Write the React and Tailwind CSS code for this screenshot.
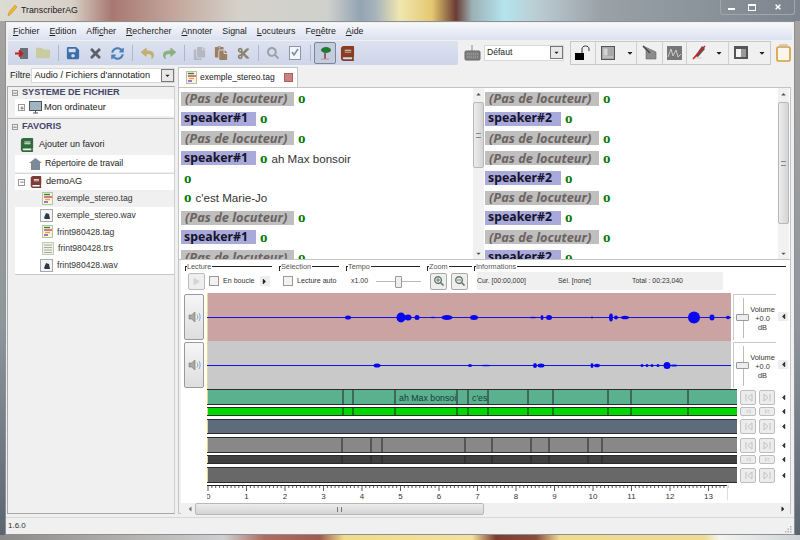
import { FaSave, FaTimes, FaSyncAlt, FaReply, FaShare, FaCopy, FaPaste, FaCut, FaSearch, FaFolder, FaCaretDown, FaCaretLeft, FaCaretRight, FaPlay, FaSearchPlus, FaSearchMinus, FaPlus, FaMinus, FaBook } from "react-icons/fa";

const font = "font-['Liberation_Sans',sans-serif]";

const menus = [
  ["", "F", "ichier"],
  ["", "E", "dition"],
  ["Affi", "c", "her"],
  ["", "R", "echercher"],
  ["", "A", "nnoter"],
  ["Si", "g", "nal"],
  ["", "L", "ocuteurs"],
  ["Fe", "n", "être"],
  ["", "A", "ide"],
];

const leftRows = [
  ["none"],
  ["spk", "speaker#1"],
  ["none"],
  ["spk", "speaker#1", "ah Max bonsoir"],
  ["plain"],
  ["plain", "", "c'est Marie-Jo"],
  ["none"],
  ["spk", "speaker#1"],
  ["none"],
];

const rightRows = [
  ["none"],
  ["spk", "speaker#2"],
  ["none"],
  ["none"],
  ["spk", "speaker#2"],
  ["none"],
  ["spk", "speaker#2"],
  ["none"],
  ["spk", "speaker#2"],
];

const wave1 = [[141, 2, 6], [194, 5, 9], [201, 3, 7], [210, 2.5, 5], [226, 0.8, 6], [240, 2.5, 11], [267, 2.5, 8], [326, 0.8, 8], [335, 2.5, 3], [342, 2.5, 6], [385, 1, 2], [404, 4, 4], [409, 2, 4], [418, 1.8, 8], [487, 6, 12], [505, 3, 5], [521, 1.8, 4]];
const wave2 = [[170, 2, 7], [263, 1.5, 4], [279, 0.8, 11], [328, 2.5, 4], [334, 2, 7], [385, 2.5, 3], [390, 1.8, 6], [435, 1.5, 3], [440, 1.5, 3], [445, 1.5, 3], [451, 1.5, 3], [460, 3.5, 7], [467, 1, 7]];
const greenTicks = [136, 146, 188, 250, 261, 281, 321, 346, 401, 424, 481];
const greyTicks = [135, 164, 175, 258, 285, 324, 342, 381, 395];

function Wave({ blobs, bg }) {
  return (
    <svg width="524" height="48" className={`block shrink-0 ${bg}`}>
      <line x1="0.5" y1="0" x2="0.5" y2="48" stroke="#eed98a" />
      <line x1="0" y1="24.5" x2="524" y2="24.5" stroke="#1414e0" />
      {blobs.map(([x, h, w], i) => (
        <ellipse key={i} cx={x} cy="24.5" rx={w / 2} ry={h} fill="#0808f0" />
      ))}
    </svg>
  );
}

function Track({ h, bg, ticks = [], labels = [] }) {
  return (
    <svg width="530" height={h} className={`block shrink-0 border-y border-[#2c2c2c] ${bg}`}>
      <line x1="0.5" y1="0" x2="0.5" y2={h} stroke="#e7d77c" />
      {ticks.map((x) => (
        <line key={x} x1={x} y1="0" x2={x} y2={h} stroke="#222" strokeWidth="1" />
      ))}
      {labels.map(([x, t]) => (
        <text key={x} x={x} y="10.5" fontSize="8.8" fontFamily="Liberation Sans" fill="#1c3a30">{t}</text>
      ))}
    </svg>
  );
}

function TrackBtns({ small }) {
  const size = small ? "h-[9px]" : "h-[15px]";
  return (
    <div className={`flex items-center w-[51px] pl-[3px] gap-[3px] ${size}`}>
      {[0, 1].map((i) => (
        <span key={i} className={`w-[17px] border border-[#bdbdbd] rounded-[2px] bg-[#ececec] flex items-center justify-center text-[#c2c2c2] ${size}`}>
          <svg width="9" height={small ? 5 : 9} viewBox="0 0 9 9" fill="none" stroke="currentColor">
            <path d={i ? "M1 1l4 3.5-4 3.5zM7 1v7" : "M2 1v7M8 1l-4 3.5 4 3.5z"} />
          </svg>
        </span>
      ))}
      <FaCaretLeft size={9} className="text-[#333] ml-[1px] shrink-0" />
    </div>
  );
}

function Ruler() {
  const ticks = [];
  for (let i = 0; i <= 135; i++) ticks.push(i);
  return (
    <svg width="530" height="16" className="block">
      <line x1="0" y1="0.5" x2="520" y2="0.5" stroke="#222" />
      {ticks.map((i) => (
        <line key={i} x1={i * 3.85 + 1} y1="0" x2={i * 3.85 + 1} y2={i % 10 === 0 ? 6 : 3} stroke="#333" strokeWidth="0.8" />
      ))}
      {[1, 2, 3, 4, 5, 6, 7, 8, 9, 10, 11, 12, 13].map((n) => (
        <text key={n} x={n * 38.5 + 1} y="13.5" textAnchor="middle" fontSize="8" fontFamily="Liberation Sans" fill="#333">{n}</text>
      ))}
      <text x="-1" y="13.5" fontSize="8" fontFamily="Liberation Sans" fill="#333">0</text>
      <line x1="520.5" y1="0" x2="520.5" y2="15" stroke="#ddd" />
    </svg>
  );
}

function TagIcon() {
  return (
    <svg width="11" height="13" viewBox="0 0 11 13" className="shrink-0">
      <rect x="0.5" y="0.5" width="10" height="12" fill="#f2f5e6" stroke="#b5c29a" />
      <path d="M2 2.5h6" stroke="#2a8a2a" strokeWidth="1.4" />
      <path d="M2 5h8" stroke="#d9336f" strokeWidth="1.4" />
      <path d="M3 7.5h5" stroke="#e0b020" strokeWidth="1.4" />
      <path d="M2 10h4" stroke="#7040c0" strokeWidth="1.4" />
    </svg>
  );
}

function WavIcon() {
  return (
    <svg width="13" height="13" viewBox="0 0 13 13" className="shrink-0">
      <rect x="0.5" y="0.5" width="12" height="12" fill="#f4f4f4" stroke="#a8a8a8" />
      <path d="M4 9l2-5 3 1 1 5H5z" fill="#2c3a48" />
    </svg>
  );
}

function TrsIcon() {
  return (
    <svg width="12" height="13" viewBox="0 0 12 13" className="shrink-0">
      <rect x="0.5" y="0.5" width="11" height="12" fill="#eef2e4" stroke="#c0ccb0" />
      <path d="M2 3h8M2 5.5h8M2 8h8M2 10.5h8" stroke="#a8a8a8" />
    </svg>
  );
}

function SpeakerButton() {
  return (
    <div className="w-[20px] h-[46px] mt-[1px] ml-[3px] mr-[3px] border border-[#9a9a9a] rounded-[2px] bg-[linear-gradient(to_bottom,#f6f6f6,#dedede)] flex items-center justify-center shrink-0">
      <svg width="13" height="14" viewBox="0 0 13 14">
        <path d="M1 5h2.5L7 2v10L3.5 9H1z" fill="#a9a9a0" stroke="#777" strokeWidth="0.6" />
        <path d="M9 4.5c1 1.5 1 3.5 0 5M11 3c1.5 2.5 1.5 5.5 0 8" fill="none" stroke="#7ea6d8" strokeWidth="0.9" />
      </svg>
    </div>
  );
}

function VolumePanel() {
  return (
    <div className="flex items-center ml-[2px] h-[47px]">
      <div className="relative w-[43px] h-[46px] border-l border-t border-[#c8c8c8] flex">
        <span className="absolute left-[9px] top-[3px] h-[40px] w-px bg-[#bdbdbd]" />
        <span className="absolute left-[2px] top-[19px] w-[13px] h-[7px] rounded-[1px] border border-[#999] bg-[#ececec]" />
        <div className="ml-[15px] w-[28px] text-center text-[7.4px] leading-[9px] text-[#333] mt-[10px]">
          Volume<br />+0.0<br />dB
        </div>
      </div>
      <span className="ml-[2px] w-[10px] h-[9px] bg-[#eeeeee] flex items-center justify-center">
        <FaCaretLeft size={9} className="text-[#333]" />
      </span>
    </div>
  );
}

function Group({ title, className, children }) {
  return (
    <div className={`relative h-[26px] shrink-0 ${className}`}>
      <span className="absolute left-0 top-[1px] w-[3px] h-[5px] border-l border-t border-[#222]" />
      <span className="absolute left-0 right-0 top-[1px] h-px bg-[#222]" />
      <span className="absolute left-[2px] -top-[3px] bg-white text-[7.3px] leading-[9px] text-[#555] pr-[1px]">{title}</span>
      <div className="pt-[6px] pl-[3px] h-full flex items-center gap-[4px]">{children}</div>
    </div>
  );
}

function Row({ row, w1, w2 }) {
  const [kind, label, text] = row;
  return (
    <div className="h-[19.8px] flex items-center shrink-0">
      {kind === "none" && (
        <span style={{ width: w1 }} className="h-[14px] bg-[#bfbfbf] pl-[4px] mr-[4px] flex items-center text-[12.8px] font-bold italic text-[#6c6361] font-['Noto_Sans',sans-serif] whitespace-nowrap">
          (Pas de locuteur)
        </span>
      )}
      {kind === "spk" && (
        <span style={{ width: w2 }} className="h-[14px] bg-[#a9a9da] pl-[3px] mr-[4px] flex items-center text-[12.3px] font-bold text-[#14142a] font-['Noto_Sans',sans-serif] whitespace-nowrap">
          {label}
        </span>
      )}
      <span className={`font-['Liberation_Serif',serif] font-bold text-[15px] leading-none text-[#0b7a0b] ${kind === "plain" ? "ml-[3px]" : ""}`}>o</span>
      {text && <span className="ml-[4px] text-[11.6px] text-[#333] whitespace-nowrap">{text}</span>}
    </div>
  );
}

function VScroll({ top, h }) {
  return (
    <div className="relative w-[11px] bg-[#f1f1f1] shrink-0 flex flex-col justify-between items-center text-[#555]">
      <FaCaretDown size={7} className="rotate-180 mt-[3px]" />
      <FaCaretDown size={7} className="mb-[2px]" />
      <span style={{ top, height: h }} className="absolute left-0 w-[11px] rounded-[2px] border border-[#b8b8b8] bg-[linear-gradient(to_right,#ececec,#d4d4d4)] flex items-center justify-center">
        <span className="w-[5px] h-[5px] border-y border-[#888]" />
      </span>
    </div>
  );
}

function FileRow({ icon, name, active, indent = "pl-[27px]" }) {
  return (
    <div className={`h-[16.8px] flex items-center gap-[4px] ${indent} ${active ? "bg-[#f0f0f0]" : "bg-white"}`}>
      {icon}
      <span className="text-[8.6px] text-[#333] whitespace-nowrap">{name}</span>
    </div>
  );
}

function ToolIcon({ children, className = "" }) {
  return <span className={`w-[22px] h-[22px] flex items-center justify-center shrink-0 ${className}`}>{children}</span>;
}

function Sep() {
  return <span className="w-[8px] flex justify-center shrink-0"><span className="w-px h-[16px] bg-[#b0b6c4]" /></span>;
}

function RightSep() {
  return <span className="w-px h-[22px] bg-[#cfcfcf] shrink-0" />;
}

export default function App() {
  return (
    <div className={`w-[800px] h-[540px] overflow-hidden flex flex-col text-[#222] ${font} bg-[linear-gradient(to_bottom,#a8a4a0,#8f969c_60%,#5a6470)]`}>
      {/* title */}
      <div className="h-[21px] shrink-0 flex items-center pl-[7px] relative bg-[linear-gradient(to_right,#dcdcd4_0%,#d8d0c8_9%,#a87870_14%,#c4a89e_22%,#d4d2ca_30%,#cfd0cc_41%,#93a4b2_45%,#a8b4bc_47%,#f0e6b0_50%,#e4c870_54%,#6a3c34_57%,#9cb0b4_59%,#b4e4ee_63%,#bccdd4_67%,#9aa2a8_75%,#7c858e_100%)]">
        <svg width="11" height="13" viewBox="0 0 11 13" className="mr-[3px]">
          <path d="M1 12l1-4 6-7 2 2-6 7z" fill="#e8b92e" stroke="#b98a14" strokeWidth="0.5" />
        </svg>
        <span className="text-[8.8px] text-[#1a1a1a]">TranscriberAG</span>
        <div className="absolute right-[5px] top-0 w-[75px] h-[15px] border border-t-0 border-[#a0a6ac] rounded-b-[3px] flex items-center text-white">
          <span className="w-[21px] flex justify-center"><span className="w-[7px] h-[2px] mt-[4px] bg-white" /></span>
          <span className="w-[20px] flex justify-center"><span className="w-[8px] h-[7px] border border-white border-t-2" /></span>
          <span className="flex-1 flex justify-center"><FaTimes size={8} /></span>
        </div>
      </div>

      {/* window */}
      <div className="mx-[5px] h-[514px] border border-[#8b9096] bg-[#f0f0f0] flex flex-col shrink-0">
        <div className="h-[17px] shrink-0 mx-[2px] mt-px bg-[linear-gradient(to_bottom,#f7f8fb,#dbe1f0)] flex items-center pl-[5px] gap-[10px] text-[8.8px] text-[#222]">
          {menus.map(([a, u, b], i) => (
            <span key={i} className="whitespace-nowrap">{a}<span className="underline">{u}</span>{b}</span>
          ))}
        </div>

        {/* toolbars */}
        <div className="h-[25px] shrink-0 flex">
          <div className="w-[450px] ml-[2px] mt-px rounded-br-[2px] bg-[linear-gradient(to_bottom,#dde2f0,#cdd5e8)] flex items-center pl-[2px] shrink-0">
            <ToolIcon>
              <svg width="15" height="13" viewBox="0 0 15 13"><path d="M6 1h8v11H6z" fill="#6d7078" /><path d="M1 6.5h7M5 3.5l3 3-3 3" fill="none" stroke="#c02020" strokeWidth="2.2" /></svg>
            </ToolIcon>
            <ToolIcon><FaFolder size={14} className="text-[#cbcba0]" /></ToolIcon>
            <Sep />
            <ToolIcon><FaSave size={14} className="text-[#3c6ea8]" /></ToolIcon>
            <ToolIcon><FaTimes size={15} className="text-[#5c6068]" /></ToolIcon>
            <ToolIcon><FaSyncAlt size={13} className="text-[#4c80b8]" /></ToolIcon>
            <Sep />
            <ToolIcon><FaReply size={13} className="text-[#c2b070]" /></ToolIcon>
            <ToolIcon><FaShare size={13} className="text-[#8eb080]" /></ToolIcon>
            <Sep />
            <ToolIcon><FaCopy size={13} className="text-[#b4b8c2]" /></ToolIcon>
            <ToolIcon><FaPaste size={14} className="text-[#9a8060]" /></ToolIcon>
            <ToolIcon><FaCut size={13} className="text-[#8c8470]" /></ToolIcon>
            <Sep />
            <ToolIcon><FaSearch size={12} className="text-[#9aa0a8]" /></ToolIcon>
            <ToolIcon>
              <svg width="12" height="14" viewBox="0 0 12 14"><rect x="0.5" y="0.5" width="11" height="13" fill="#f4f6f8" stroke="#8a96a4" /><path d="M3 6l2 3 4-6" fill="none" stroke="#6f8ca8" strokeWidth="1.5" /></svg>
            </ToolIcon>
            <Sep />
            <span className="w-[22px] h-[22px] rounded-[2px] border border-[#7d8694] bg-[#c4cde0] flex items-center justify-center shrink-0">
              <svg width="14" height="16" viewBox="0 0 14 16"><path d="M7 8v6" stroke="#8a3a3a" strokeWidth="1.5" /><ellipse cx="8" cy="5" rx="5" ry="3" fill="#1f7a30" /><path d="M3 14h8" stroke="#c88" /></svg>
            </span>
            <ToolIcon><FaBook size={15} className="text-[#8a3c20] ml-[1px]" /></ToolIcon>
          </div>
          <div className="flex items-center pl-[6px]">
            <svg width="17" height="16" viewBox="0 0 17 16" className="shrink-0">
              <path d="M8 0v6" stroke="#888" />
              <rect x="1" y="6" width="15" height="9" rx="1" fill="#808080" stroke="#666" />
              <path d="M3 9h11M3 12h11" stroke="#a8a8a8" strokeDasharray="1 1" />
            </svg>
            <div className="ml-[3px] w-[80px] h-[16px] bg-white border border-[#d8d8d8] flex items-center pl-[2px] text-[8.6px] justify-between shrink-0">
              Défaut
              <span className="w-[13px] h-[13px] border border-[#777] bg-[#e8e8e8] flex items-center justify-center"><FaCaretDown size={7} /></span>
            </div>
            <div className="ml-[6px] w-[201px] h-[24px] border border-[#c8c8c8] bg-[#f0f0f0] flex items-center shrink-0">
              <span className="w-[24px] flex justify-center">
                <svg width="16" height="16" viewBox="0 0 16 16"><rect x="0" y="8" width="9" height="7" fill="#000" /><path d="M7 8V4c0-2 1.5-3 3.5-3S14 2 14 4v2" fill="none" stroke="#333" strokeWidth="1" /></svg>
              </span>
              <RightSep />
              <span className="w-[40px] flex items-center pl-[5px] gap-[11px]">
                <svg width="14" height="14" viewBox="0 0 14 14" className="shrink-0"><rect x="0.5" y="0.5" width="13" height="13" fill="#a8a8a8" stroke="#555" /><rect x="2.5" y="2.5" width="4" height="7" fill="#d4d4d4" /><path d="M2 11h10" stroke="#d4d4d4" /></svg>
                <FaCaretDown size={8} className="shrink-0" />
              </span>
              <RightSep />
              <span className="w-[25px] flex justify-center">
                <svg width="15" height="15" viewBox="0 0 15 15"><path d="M1 1l13 6v7H4V5z" fill="#8c8c8c" stroke="#666" strokeWidth="0.6" /><path d="M1 1l7 7" stroke="#444" strokeWidth="1.4" /></svg>
              </span>
              <RightSep />
              <span className="w-[23px] flex justify-center">
                <svg width="15" height="14" viewBox="0 0 15 14"><rect width="15" height="14" fill="#777" /><path d="M1 11l3-8 2 7 3-6 2 7 3-3" fill="none" stroke="#ccc" /></svg>
              </span>
              <RightSep />
              <span className="w-[41px] flex items-center pl-[5px] gap-[8px]">
                <svg width="15" height="15" viewBox="0 0 15 15" className="shrink-0"><path d="M10 1l3 3-7 8-3-1z" fill="#555" /><path d="M1 13h9" stroke="#ccc" /><path d="M1 14L13 1" stroke="#d02020" strokeWidth="1.6" /></svg>
                <FaCaretDown size={8} className="shrink-0" />
              </span>
              <RightSep />
              <span className="flex items-center pl-[5px] gap-[10px]">
                <span className="w-[14px] h-[13px] border-2 border-t-[3px] border-[#555] bg-[linear-gradient(to_right,#f4f4f4_50%,#999_50%)] shrink-0" />
                <FaCaretDown size={8} className="shrink-0" />
              </span>
            </div>
            <svg width="15" height="18" viewBox="0 0 15 18" className="ml-[5px] shrink-0">
              <rect x="1" y="3" width="13" height="14" rx="1.5" fill="#fbf6ec" stroke="#d89a3c" strokeWidth="1.6" />
              <path d="M4 3V1h7v2" fill="none" stroke="#c8c0b0" strokeWidth="1.4" />
            </svg>
          </div>
        </div>

        {/* main */}
        <div className="flex-1 flex min-h-0 pl-[1px]">
          {/* left panel */}
          <div className="w-[170px] shrink-0 flex flex-col pr-[2px]">
            <div className="h-[21px] flex items-center shrink-0">
              <span className="text-[9.2px] text-[#222] pl-[3px]">Filtre</span>
              <div className="ml-[1px] flex-1 h-[15px] bg-white border border-[#d8d8d8] flex items-center justify-between pl-[2px] text-[9.2px] whitespace-nowrap">
                Audio / Fichiers d'annotation
                <span className="w-[13px] h-[13px] border border-[#777] bg-[#e8e8e8] flex items-center justify-center"><FaCaretDown size={7} /></span>
              </div>
            </div>
            <div className="flex-1 border border-[#a8a8a8] border-r-[#d0d0d0] bg-[#f0f0f0] flex flex-col">
              <div className="h-[12px] pl-[4px] flex items-center gap-[4px] text-[9.1px] font-bold text-[#45456a] shrink-0 whitespace-nowrap">
                <span className="w-[6px] h-[6px] border border-[#999] flex items-center justify-center"><FaMinus size={4} className="text-[#555]" /></span>
                SYSTEME DE FICHIER
              </div>
              <div className="ml-[7px] h-[17px] bg-white flex items-center pl-[3px] text-[9.2px] shrink-0">
                <span className="w-[7px] h-[7px] border border-[#999] flex items-center justify-center mr-[4px]"><FaPlus size={4} className="text-[#555]" /></span>
                <svg width="13" height="13" viewBox="0 0 13 13" className="mr-[2px]"><rect x="0.5" y="0.5" width="12" height="9" fill="#9fb4c4" stroke="#555" /><path d="M4 12h5M6.5 10v2" stroke="#555" /></svg>
                Mon ordinateur
              </div>
              <div className="h-px bg-[#bcbcbc] mt-[2px] shrink-0" />
              <div className="h-[14px] pl-[4px] flex items-center gap-[4px] text-[9.1px] font-bold text-[#45456a] mt-px shrink-0">
                <span className="w-[6px] h-[6px] border border-[#999] flex items-center justify-center"><FaMinus size={4} className="text-[#555]" /></span>
                FAVORIS
              </div>
              <div className="h-[21px] flex items-center pl-[12px] gap-[5px] text-[9px] shrink-0">
                <FaBook size={14} className="text-[#2f6b3c]" />
                Ajouter un favori
              </div>
              <div className="ml-[7px] h-[17px] bg-white flex items-center pl-[14px] gap-[3px] text-[8.7px] shrink-0">
                <svg width="13" height="12" viewBox="0 0 13 12"><path d="M6.5 0L13 5H11v7H2V5H0z" fill="#7c8a98" /></svg>
                Répertoire de travail
              </div>
              <div className="ml-[7px] mt-px h-[17px] bg-white flex items-center pl-[3px] gap-[5px] text-[9.2px] shrink-0 border-t border-[#d8d8d8]">
                <span className="w-[7px] h-[7px] border border-[#999] flex items-center justify-center"><FaMinus size={4} className="text-[#555]" /></span>
                <FaBook size={12} className="text-[#7a3c34]" />
                <span className="ml-[-1px]">demoAG</span>
              </div>
              <div className="ml-[7px] flex flex-col shrink-0 border-b border-[#c8c8c8]">
                <FileRow active icon={<TagIcon />} name="exemple_stereo.tag" />
                <FileRow icon={<WavIcon />} name="exemple_stereo.wav" indent="pl-[25px]" />
                <FileRow icon={<TagIcon />} name="frint980428.tag" />
                <FileRow icon={<TrsIcon />} name="frint980428.trs" />
                <FileRow icon={<WavIcon />} name="frint980428.wav" indent="pl-[25px]" />
              </div>
            </div>
          </div>

          {/* right area */}
          <div className="flex-1 flex flex-col min-w-0 pl-[1px] pr-[3px]">
            {/* tab */}
            <div className="h-[22px] flex items-end shrink-0">
              <div className="w-[120px] h-[20px] bg-white border border-b-0 border-[#c4c4c4] flex items-center pl-[7px] shrink-0">
                <TagIcon />
                <span className="ml-[3px] text-[8.5px] whitespace-nowrap">exemple_stereo.tag</span>
                <span className="ml-auto mr-[4px] w-[9px] h-[9px] bg-[#cc8080] border border-[#b06060]" />
              </div>
            </div>
            <div className="flex-1 min-h-0 border border-[#c4c4c4] bg-[#f0f0f0] flex flex-col">
              {/* transcripts */}
              <div className="h-[171px] shrink-0 flex bg-white">
                <div className="w-[294px] pl-[2px] pt-px overflow-hidden flex flex-col shrink-0">
                  {leftRows.map((r, i) => <Row key={i} row={r} w1={113} w2={75} />)}
                </div>
                <VScroll top={14} h={66} />
                <div className="w-[294px] pl-[1px] pt-px overflow-hidden flex flex-col shrink-0">
                  {rightRows.map((r, i) => <Row key={i} row={r} w1={114} w2={76} />)}
                </div>
                <VScroll top={14} h={122} />
              </div>

              {/* controls + tracks */}
              <div className="h-px bg-[#c4c4c4] shrink-0" />
              <div className="flex-1 min-h-0 ml-[2px] bg-white flex flex-col">
                <div className="h-[33px] shrink-0 flex pl-[4px] pt-[5px] gap-[7px]">
                  <Group title="Lecture" className="w-[87px]">
                    <span className="w-[17px] h-[17px] rounded-[2px] border border-[#bbb] bg-[#eeeeee] flex items-center justify-center shrink-0"><FaPlay size={7} className="text-[#d4d4d4]" /></span>
                    <span className="w-[10px] h-[10px] border border-[#999] bg-[#f2f2f2] shrink-0" />
                    <span className="text-[7.1px] whitespace-nowrap text-[#333]">En boucle</span>
                    <span className="ml-[1px] w-[10px] h-[10px] bg-[#eeeeee] flex items-center justify-center shrink-0"><FaCaretRight size={9} /></span>
                  </Group>
                  <Group title="Sélection" className="w-[60px]">
                    <span className="w-[10px] h-[10px] border border-[#999] bg-[#f2f2f2] ml-px shrink-0" />
                    <span className="text-[7.1px] whitespace-nowrap text-[#333]">Lecture auto</span>
                  </Group>
                  <Group title="Tempo" className="w-[74px]">
                    <span className="text-[7px] ml-[2px] text-[#333]">x1.00</span>
                    <span className="relative w-[45px] h-[9px] flex items-center shrink-0 ml-[4px]">
                      <span className="w-full h-px bg-[#bbb]" />
                      <span className="absolute left-[19px] top-[-1px] w-[7px] h-[12px] rounded-[1px] border border-[#999] bg-[#eeeeee]" />
                    </span>
                  </Group>
                  <Group title="Zoom" className="w-[45px]">
                    <span className="w-[17px] h-[17px] rounded-[2px] border border-[#aaa] bg-[#eeeeee] flex items-center justify-center shrink-0"><FaSearchPlus size={10} className="text-[#6a7a70]" /></span>
                    <span className="w-[17px] h-[17px] rounded-[2px] border border-[#aaa] bg-[#eeeeee] flex items-center justify-center shrink-0"><FaSearchMinus size={10} className="text-[#6a7a70]" /></span>
                  </Group>
                  <Group title="Informations" className="w-[312px] -ml-[5px]">
                    <div className="w-[246px] h-[18px] bg-[#f0f0f0] flex items-center text-[6.9px] text-[#333] whitespace-nowrap">
                      <span className="w-[81px]">Cur. [00:00,000]</span>
                      <span className="w-[74px]">Sél. [none]</span>
                      <span>Total : 00:23,040</span>
                    </div>
                  </Group>
                </div>
                <div className="flex items-start shrink-0">
                  <SpeakerButton />
                  <Wave blobs={wave1} bg="bg-[#cba3a3]" />
                  <VolumePanel />
                </div>
                <div className="flex items-start shrink-0">
                  <SpeakerButton />
                  <Wave blobs={wave2} bg="bg-[#c9c9c9]" />
                  <VolumePanel />
                </div>
                <div className="pl-[26px] flex flex-col shrink-0">
                  <div className="flex items-center"><Track h={16} bg="bg-[#5ab190]" ticks={greenTicks} labels={[[192, "ah Max bonsoi"], [265, "c'es"]]} /><TrackBtns /></div>
                  <div className="flex items-center mt-[2px]"><Track h={9} bg="bg-[#00d800]" ticks={greenTicks} /><TrackBtns small /></div>
                  <div className="flex items-center mt-[3px]"><Track h={15} bg="bg-[#5e6b7a]" /><TrackBtns /></div>
                  <div className="flex items-center mt-[3px]"><Track h={16} bg="bg-[#888888]" ticks={greyTicks} /><TrackBtns /></div>
                  <div className="flex items-center mt-[2px]"><Track h={9} bg="bg-[#404040]" ticks={greyTicks} /><TrackBtns small /></div>
                  <div className="flex items-center mt-[3px]"><Track h={16} bg="bg-[#686868]" /><TrackBtns /></div>
                  <div className="mt-[2px]"><Ruler /></div>
                </div>
                <div className="mt-[2px] h-[12px] bg-[#f0f0f0] flex items-center relative shrink-0">
                  <FaCaretLeft size={8} className="ml-[5px] text-[#777]" />
                  <span className="absolute left-[14px] w-[289px] h-[12px] rounded-[2px] border border-[#b8b8b8] bg-[linear-gradient(to_bottom,#ececec,#d4d4d4)] flex items-center justify-center">
                    <span className="w-[5px] h-[5px] border-x border-[#777]" />
                  </span>
                  <FaCaretRight size={8} className="ml-auto mr-[3px] text-[#222]" />
                </div>
              </div>
            </div>
          </div>
        </div>

        {/* status */}
        <div className="h-[17px] mt-[3px] shrink-0 flex items-center justify-between pl-[2px] pr-[2px] text-[8px] text-[#333] border-t border-[#d8d8d8]">
          1.6.0
          <svg width="7" height="7" viewBox="0 0 7 7" className="mt-[6px]" fill="#b4b4b4">
            <rect x="5" y="0" width="1.5" height="1.5" /><rect x="2.5" y="2.5" width="1.5" height="1.5" /><rect x="5" y="2.5" width="1.5" height="1.5" /><rect x="0" y="5" width="1.5" height="1.5" /><rect x="2.5" y="5" width="1.5" height="1.5" /><rect x="5" y="5" width="1.5" height="1.5" />
          </svg>
        </div>
      </div>
      {/* desktop below the window */}
      <div className="h-[5px] shrink-0 bg-[linear-gradient(to_right,#8c8a88_0%,#cfcfcf_28%,#b06c62_33%,#a05c50_40%,#f0dc8c_43%,#f2e29c_59%,#7c3c30_62%,#8c4c3c_67%,#f0dc90_70%,#eedc94_88%,#f4f4f0_90%,#d0d4d8_100%)]" />
    </div>
  );
}
